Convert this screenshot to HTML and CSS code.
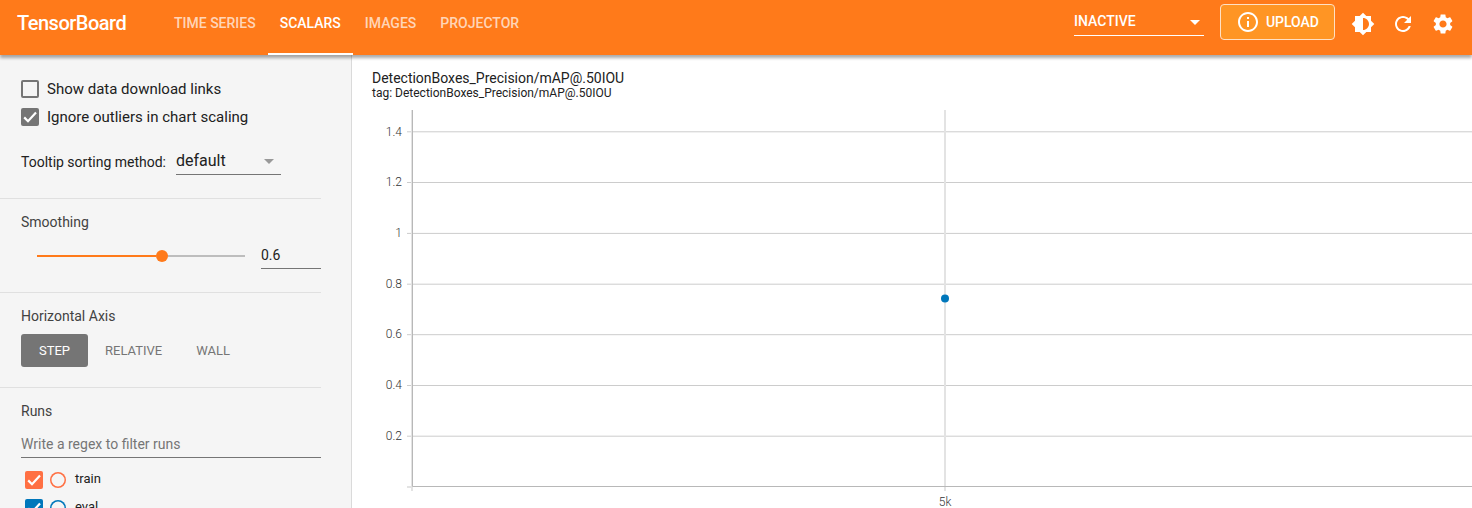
FILE: index.html
```
<!DOCTYPE html>
<html lang="en">
<head>
<meta charset="utf-8">
<title>TensorBoard</title>
<link rel="stylesheet" href="styles.css">
</head>
<body>
<header class="toolbar">
  <div class="brand">TensorBoard</div>
  <nav class="tabs">
    <a class="tab">TIME SERIES</a>
    <a class="tab active">SCALARS</a>
    <a class="tab">IMAGES</a>
    <a class="tab">PROJECTOR</a>
  </nav>
  <div class="actions">
    <div class="inactive"><span>INACTIVE</span><i class="caret white"></i></div>
    <button class="upload">
      <svg width="24" height="24" viewBox="0 0 24 24"><path d="M11 7h2v2h-2zm0 4h2v6h-2zm1-9C6.480 2 2 6.480 2 12s4.480 10 10 10 10-4.480 10-10S17.520 2 12 2zm0 18c-4.410 0-8-3.590-8-8s3.590-8 8-8 8 3.590 8 8-3.590 8-8 8z"/></svg>
      <span>UPLOAD</span>
    </button>
    <svg class="icon" viewBox="0 0 24 24"><path d="M20 15.310L23.310 12 20 8.690V4h-4.690L12 .690 8.690 4H4v4.690L.690 12 4 15.310V20h4.690L12 23.310 15.310 20H20v-4.690zM12 18V6c3.310 0 6 2.690 6 6s-2.690 6-6 6z"/></svg>
    <svg class="icon" viewBox="0 0 24 24"><path d="M17.650 6.350C16.200 4.900 14.210 4 12 4c-4.420 0-7.990 3.580-7.990 8s3.570 8 7.990 8c3.730 0 6.840-2.550 7.730-6h-2.080c-.820 2.330-3.040 4-5.650 4-3.310 0-6-2.690-6-6s2.690-6 6-6c1.660 0 3.140.690 4.220 1.780L13 11h7V4l-2.350 2.350z"/></svg>
    <svg class="icon" viewBox="0 0 24 24"><path d="M19.140 12.940c.040-.300.060-.610.060-.940 0-.320-.020-.640-.070-.940l2.030-1.580c.180-.140.230-.410.120-.610l-1.920-3.320c-.120-.220-.370-.290-.590-.220l-2.390.960c-.500-.380-1.030-.700-1.620-.940l-.360-2.540c-.040-.240-.240-.410-.480-.410h-3.840c-.240 0-.430.170-.470.410l-.360 2.540c-.590.240-1.130.570-1.620.940l-2.390-.960c-.220-.080-.470 0-.590.220L2.740 8.870c-.120.210-.080.470.120.610l2.030 1.580c-.050.300-.090.630-.090.940s.020.640.070.940l-2.030 1.580c-.180.140-.230.410-.120.610l1.920 3.320c.120.220.370.290.590.220l2.390-.960c.500.380 1.030.700 1.620.940l.360 2.540c.050.240.240.410.480.410h3.840c.240 0 .440-.170.470-.410l.360-2.540c.590-.240 1.130-.560 1.620-.940l2.390.960c.220.080.470 0 .590-.220l1.920-3.320c.120-.220.070-.470-.120-.610l-2.010-1.580zM12 15.600c-1.980 0-3.600-1.620-3.600-3.600s1.620-3.600 3.600-3.600 3.600 1.620 3.600 3.600-1.620 3.600-3.600 3.600z"/></svg>
  </div>
</header>
<div class="content">
  <aside class="sidebar">
    <section class="section options">
      <label class="check-row"><span class="box empty"></span>Show data download links</label>
      <label class="check-row"><span class="box"><svg viewBox="0 0 18 18"><path d="M3.200 9.400l3.800 3.800 8-8.600"/></svg></span>Ignore outliers in chart scaling</label>
      <div class="tooltip-row"><span class="tooltip-label">Tooltip sorting method:</span><div class="dropdown"><span>default</span><i class="caret"></i></div></div>
    </section>
    <section class="section smoothing">
      <h3>Smoothing</h3>
      <div class="slider-row">
        <div class="slider"><span class="filled"></span><span class="knob"></span><span class="rest"></span></div>
        <div class="number">0.6</div>
      </div>
    </section>
    <section class="section axis">
      <h3>Horizontal Axis</h3>
      <div class="axis-buttons"><button class="selected">STEP</button><button>RELATIVE</button><button>WALL</button></div>
    </section>
    <section class="runs">
      <h3>Runs</h3>
      <div class="regex">Write a regex to filter runs</div>
      <div class="run train"><span class="box"><svg viewBox="0 0 18 18"><path d="M3.200 9.400l3.800 3.800 8-8.600"/></svg></span><span class="ring"></span><span class="run-name">train</span></div>
      <div class="run eval"><span class="box"><svg viewBox="0 0 18 18"><path d="M3.200 9.400l3.800 3.800 8-8.600"/></svg></span><span class="ring"></span><span class="run-name">eval</span></div>
    </section>
  </aside>
  <main class="chart-pane">
    <div class="chart-title">DetectionBoxes_Precision/mAP@.50IOU</div>
    <div class="chart-tag">tag: DetectionBoxes_Precision/mAP@.50IOU</div>
    <svg class="chart" width="1100" height="398" viewBox="372 110 1100 398">
      <g class="grid">
        <path d="M407 131.800H1472M407 182.500H1472M407 233.400H1472M407 284.200H1472M407 334.700H1472M407 385.500H1472M407 436.200H1472"/>
        <path class="vertical" d="M945 110V491M412 110V491M407 487H412"/>
      </g>
      <path class="baseline" d="M412.500 110V486.500H1472"/>
      <g class="ticks">
        <text x="402" y="136">1.4</text><text x="402" y="186">1.2</text><text x="402" y="237">1</text><text x="402" y="288">0.8</text><text x="402" y="338">0.6</text><text x="402" y="389">0.4</text><text x="402" y="440">0.2</text>
        <text class="mid" x="945" y="506">5k</text>
      </g>
      <circle class="point" cx="945" cy="298.500" r="4"/>
    </svg>
  </main>
</div>
</body>
</html>
```
FILE: styles.css
```
* { box-sizing: border-box; }
body { margin: 0; height: 508px; overflow: hidden; font-family: Roboto, sans-serif; color: #212121; background: #fff; display: flex; flex-direction: column; }
button { font-family: inherit; border: 0; background: none; padding: 0; }
h3 { margin: 0; font-size: 14px; font-weight: 400; line-height: 20px; color: #424242; }
.toolbar { height: 55px; flex: none; display: flex; align-items: flex-start; background: #ff7a1a; color: #fff; box-shadow: 0 3px 3px rgba(0,0,0,.33); position: relative; z-index: 1; }
.brand { width: 145px; margin-left: 17px; font-size: 20px; font-weight: 500; line-height: 46px; letter-spacing: -.5px; }
.tabs { display: flex; height: 55px; }
.tab { padding: 0 12px; font-size: 14px; font-weight: 500; line-height: 46px; border-bottom: 2px solid transparent; color: rgba(255,255,255,.7); }
.tab.active { color: #fff; border-color: #fff; }
.actions { margin-left: auto; display: flex; padding-right: 17px; }
.inactive { width: 130px; height: 36px; border-bottom: 1px solid #fff; display: flex; justify-content: space-between; align-items: center; padding: 7px 4px 0 0; font-size: 14px; font-weight: 500; margin-right: 16px; }
.caret { width: 0; height: 0; border: 5px solid transparent; border-top-color: #999; border-bottom: 0; }
.dropdown .caret { margin-top: 2px; }
.caret.white { border-top-color: #fff; margin-top: 2px; }
.upload { width: 115px; height: 36px; margin: 4px 16px 0 0; border: 1px solid #ffe0c4; border-radius: 4px; background: #ff9524; color: #fff; display: flex; align-items: center; padding-left: 15px; gap: 6px; font-size: 14px; font-weight: 500; letter-spacing: -.05px; }
.upload svg, .icon { fill: #fff; flex: none; }
.icon { width: 24px; height: 24px; margin-top: 12px; }
.icon + .icon { margin-left: 16px; }
.content { display: flex; flex: 1; min-height: 0; }
.sidebar { width: 352px; flex: none; background: #f5f5f5; border-right: 1px solid #dadada; overflow: hidden; }
.section { width: 321px; border-bottom: 1px solid #e0e0e0; padding-left: 21px; }
.options { height: 144px; padding-top: 20px; }
.check-row { display: flex; height: 28px; align-items: center; gap: 8px; font-size: 15px; }
.box { width: 18px; height: 18px; border-radius: 2px; background: #757575; flex: none; }
.box.empty { background: none; border: 2px solid #757575; }
.box svg { display: block; fill: none; stroke: #fff; stroke-width: 2.2; }
.tooltip-row { display: flex; margin-top: 16px; height: 28px; }
.tooltip-label { width: 155px; font-size: 14px; line-height: 30px; }
.dropdown { width: 105px; border-bottom: 1px solid #757575; font-size: 16px; line-height: 27px; display: flex; justify-content: space-between; align-items: center; padding-right: 7px; }
.smoothing { height: 94px; padding-top: 13px; }
.slider-row { display: flex; height: 37px; align-items: flex-end; justify-content: space-between; padding-left: 16px; }
.slider { width: 208px; height: 26px; display: flex; align-items: center; }
.filled { width: 119px; height: 2px; background: #ff7a1a; }
.knob { width: 12px; height: 12px; border-radius: 50%; background: #ff7a1a; }
.rest { flex: 1; height: 2px; background: #bdbdbd; }
.number { width: 60px; height: 27px; font-size: 14px; line-height: 26px; border-bottom: 1px solid #757575; }
.axis { height: 95px; padding-top: 13px; }
.axis-buttons { display: flex; margin-top: 8px; }
.axis-buttons button { height: 33px; padding: 0 17px; font-size: 13px; color: #757575; border-radius: 3px; }
.axis-buttons .selected { width: 67px; background: #757575; color: #fff; }
.runs { padding: 13px 30px 0 21px; }
.regex { margin: 12px 0 8px; height: 25px; line-height: 22px; font-size: 14px; color: #757575; border-bottom: 1px solid #757575; }
.run { height: 28px; display: flex; align-items: center; padding-left: 4px; font-size: 13px; }
.ring { width: 16px; height: 16px; margin: 0 9px 0 7px; border-radius: 50%; box-shadow: inset 0 0 0 1.5px; }
.run-name { margin-top: -3px; }
.train .box { background: #ff7043; } .train .ring { color: #ff7043; }
.eval .box { background: #0077bb; } .eval .ring { color: #0077bb; }
.chart-pane { flex: 1; padding: 14px 0 0 20px; overflow: hidden; }
.chart-title { font-size: 14px; line-height: 18px; letter-spacing: -.01px; }
.chart-tag { font-size: 12px; line-height: 12px; }
.chart { display: block; margin-top: 11px; }
.grid path { fill: none; stroke: #ccc; stroke-width: 1; }
.grid .vertical { stroke: #e3e3e3; stroke-width: 2; }
.baseline { fill: none; stroke: #b8b8b8; }
.ticks { font-size: 12px; font-weight: 300; fill: #333; text-anchor: end; }
.ticks .mid { text-anchor: middle; }
.point { fill: #0077bb; }
```
